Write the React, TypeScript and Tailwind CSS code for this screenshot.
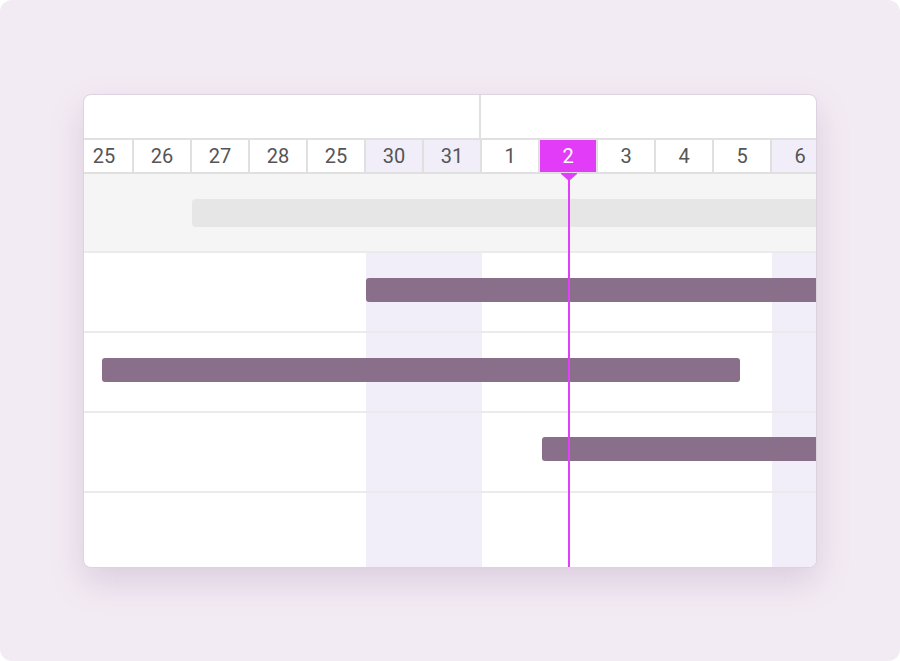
const days = [
  { label: "25" },
  { label: "26" },
  { label: "27" },
  { label: "28" },
  { label: "25" },
  { label: "30", weekend: true },
  { label: "31", weekend: true },
  { label: "1" },
  { label: "2", today: true },
  { label: "3" },
  { label: "4" },
  { label: "5" },
  { label: "6", weekend: true },
  { label: "", weekend: true },
];

export default function App() {
  return (
    <div className="w-[900px] h-[661px] bg-white">
      <div
        className="w-[900px] h-[661px] rounded-[12px] bg-[#f3ebf4] pt-[94px] pl-[83px]"
        style={{ fontFamily: "Roboto, 'Liberation Sans', sans-serif" }}
      >
        <div className="w-[734px] h-[474px] rounded-[8px] border border-[#ddd2df] bg-white overflow-hidden shadow-[0_14px_34px_rgba(110,70,120,0.18)]">
          <div className="-ml-[8px] w-[812px] flex flex-col h-full">
            {/* month row */}
            <div className="flex h-[45px] border-b-2 border-[#e0e0e0]">
              <div className="w-[405px] border-r-2 border-[#e0e0e0]" />
              <div className="flex-1" />
            </div>

            {/* day cells */}
            <div className="flex h-[34px] border-b-2 border-[#e0e0e0]">
              {days.map((d, i) => (
                <div
                  key={i}
                  className={
                    "w-[58px] shrink-0 border-r-2 border-[#e0e0e0] flex items-center justify-center text-[20px] " +
                    (d.today
                      ? "bg-[#e23cf8] text-white"
                      : d.weekend
                        ? "bg-[#f1eef9] text-[#555555]"
                        : "bg-white text-[#555555]")
                  }
                >
                  {d.label}
                </div>
              ))}
            </div>

            {/* body */}
            <div className="relative flex-1 flex flex-col">
              <div className="absolute inset-0 flex">
                {days.map((d, i) => (
                  <div
                    key={i}
                    className={"w-[58px] shrink-0 " + (d.weekend ? "bg-[#f1eef9]" : "")}
                  />
                ))}
              </div>

              <div className="relative h-[79px] bg-[#f5f5f5] border-b-2 border-[#ebebeb] pt-[25px]">
                <div className="ml-[116px] w-[720px] h-[28px] rounded-[4px] bg-[#e6e6e6]" />
              </div>
              <div className="relative h-[80px] border-b-2 border-[#ebebeb] pt-[25px]">
                <div className="ml-[290px] w-[540px] h-[24px] rounded-[3px] bg-[#8a6f8b]" />
              </div>
              <div className="relative h-[80px] border-b-2 border-[#ebebeb] pt-[25px]">
                <div className="ml-[26px] w-[638px] h-[24px] rounded-[3px] bg-[#8a6f8b]" />
              </div>
              <div className="relative h-[80px] border-b-2 border-[#ebebeb] pt-[24px]">
                <div className="ml-[466px] w-[360px] h-[24px] rounded-[3px] bg-[#8a6f8b]" />
              </div>
              <div className="flex-1" />

              {/* today marker */}
              <div className="absolute top-0 bottom-0 left-[492px] w-[2px] bg-[#e040fb]" />
              <svg
                className="absolute top-[-1px] left-[485px]"
                width="16"
                height="8"
                viewBox="0 0 16 8"
              >
                <polygon points="0,0 16,0 16,1 8,8 0,1" fill="#e040fb" />
              </svg>
            </div>
          </div>
        </div>
      </div>
    </div>
  );
}
